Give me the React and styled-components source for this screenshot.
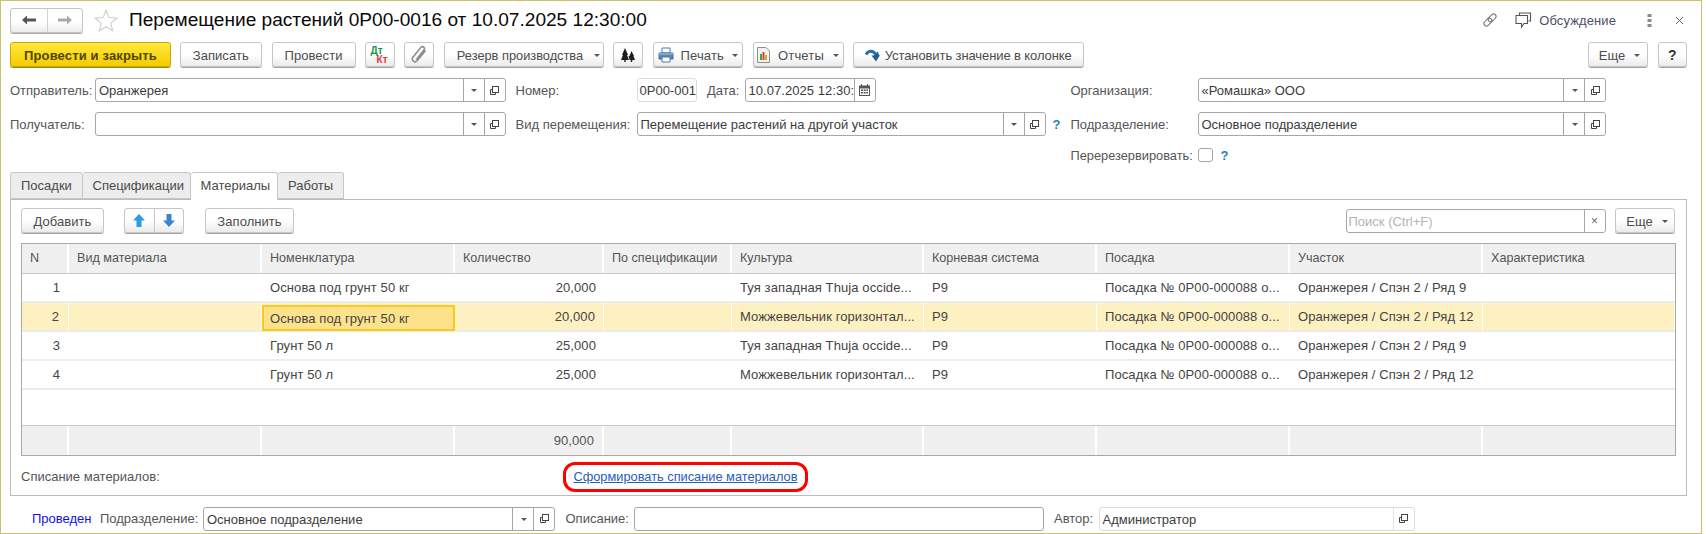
import React from "react";
import styled, { createGlobalStyle } from "styled-components";

const Global = createGlobalStyle`
  html, body { margin: 0; padding: 0; background: #fff; }
  body { font-family: "Liberation Sans", Arial, sans-serif; font-size: 13px; color: #4a4a4a; }
  * { box-sizing: border-box; }
`;

const Frame = styled.div`
  width: 1702px; height: 534px;
  border: 1px solid #cdbf70;
  padding-top: 7px; padding-left: 9px; overflow: hidden; background: #fff;
`;

/* ---------- header ---------- */
const Header = styled.div`
  display: flex; align-items: center; height: 24px; padding-right: 17px;
`;
const NavGroup = styled.div`
  display: flex; width: 73px; height: 25px;
  border: 1px solid #c4c4c4; border-radius: 3px;
  background: linear-gradient(#fff 55%, #ececec);
  box-shadow: 0 1px 0 #a9a9a9;
`;
const NavCell = styled.div`
  width: 36px; display: flex; align-items: center; justify-content: center;
  & + & { border-left: 1px solid #d2d2d2; }
`;
const StarBox = styled.div`
  margin-left: 11px; width: 25px; height: 24px; display: flex; align-items: center;
`;
const Title = styled.div`
  margin-left: 10px; font-size: 19.1px; color: #0a0a0a; white-space: nowrap;
`;
const HeaderRight = styled.div`
  margin-left: auto; display: flex; align-items: center; color: #5a6070;
`;
const HeaderGap = styled.span`width: ${p => p.$w}px; flex: none;`;
const HeaderLabel = styled.span`
  font-size: 13px; color: #4a5068; margin-left: 7px; margin-right: 31px; letter-spacing: .1px;
`;

/* ---------- buttons ---------- */
const Toolbar = styled.div`
  display: flex; height: 26px; margin-top: 10px; padding-right: 14px;
`;
const Btn = styled.div`
  width: ${p => p.$w}px; height: 25px; margin-left: ${p => p.$ml ?? 0}px; flex: none;
  display: flex; align-items: center; justify-content: center; gap: ${p => p.$gap ?? 6}px;
  padding: 1px 0 0 ${p => p.$pl ?? 0}px;
  border: 1px solid ${p => (p.$primary ? "#c9a800" : "#c6c6c6")}; border-radius: 3px;
  background: ${p => (p.$primary ? "linear-gradient(#ffe93f, #f6cb00)" : "linear-gradient(#fff 50%, #ebebeb)")};
  box-shadow: 0 1px 0 ${p => (p.$primary ? "#9f8a1c" : "#a4a4a4")};
  color: ${p => (p.$primary ? "#4f4500" : "#4c4c4c")};
  font-weight: ${p => (p.$primary ? 700 : 400)};
  font-size: ${p => p.$fs ?? 13}px; letter-spacing: ${p => p.$ls ?? 0.05}px; white-space: nowrap;
`;
const Caret = styled.i`
  display: inline-block; width: 0; height: 0; margin-left: 1px; margin-top: 1px;
  border-left: 3px solid transparent; border-right: 3px solid transparent; border-top: 3px solid #555;
`;
const HelpMark = styled.b`color: #333; font-size: 14px;`;
const Spacer = styled.div`flex: 1;`;
const DtKt = styled.div`
  position: relative; width: 19px; height: 18px; font-size: 10px; font-weight: 700; line-height: 9px;
`;
const Dt = styled.span`position: absolute; left: 0; top: 0; color: #0c9a45;`;
const Kt = styled.span`position: absolute; left: 6px; top: 9px; color: #e5383b;`;
const ArrowGroup = styled.div`
  display: flex; width: 60px; height: 25px; margin-left: 20px; flex: none;
  border: 1px solid #c6c6c6; border-radius: 3px;
  background: linear-gradient(#fff 50%, #ebebeb); box-shadow: 0 1px 0 #a4a4a4;
`;
const ArrowCell = styled.div`
  flex: 1; display: flex; align-items: center; justify-content: center;
  & + & { border-left: 1px solid #c6c6c6; }
`;

/* ---------- fields ---------- */
const FormGrid = styled.div`
  display: grid; grid-template-columns: 505.5px 555px 1fr; height: 87px; margin-top: 10px;
`;
const FormCol = styled.div`display: flex; flex-direction: column;`;
const FieldRow = styled.div`
  display: flex; align-items: center; height: 24px;
  & + & { margin-top: 10px; }
`;
const CheckRow = styled(FieldRow)`height: 14px; margin-top: 12px !important;`;
const Label = styled.span`
  flex: none; width: ${p => (p.$w ? p.$w + "px" : "auto")}; margin-left: ${p => p.$ml ?? 0}px;
  white-space: nowrap; color: #555; letter-spacing: 0;
  font-size: ${p => p.$fs ?? 13}px;
`;
const Field = styled.div`
  display: flex; align-items: stretch; flex: none; width: ${p => p.$w}px; height: 24px;
  margin-left: ${p => p.$ml ?? 0}px;
  border: 1px solid ${p => (p.$soft ? "#dcdcdc" : "#a6a6a6")}; border-radius: 3px; background: #fff;
`;
const FieldText = styled.div`
  flex: 1; min-width: 0; padding-left: ${p => p.$pl ?? 3}px; line-height: 23px; color: #3c3c3c;
  letter-spacing: ${p => p.$ls ?? 0}px;
  white-space: nowrap; overflow: hidden;
`;
const Placeholder = styled(FieldText)`color: #b4b4b4; padding-left: 2px;`;
const FieldBtn = styled.div`
  flex: none; width: 21px; display: flex; align-items: center; justify-content: center;
  border-left: 1px solid ${p => (p.$soft ? "#e2e2e2" : "#a6a6a6")};
`;
const Help = styled.span`
  margin-left: ${p => p.$ml ?? 5}px; color: #1f7fc0; font-weight: 700; font-size: 13px;
`;
const Check = styled.div`
  width: 15px; height: 14px; border: 1px solid #a6a6a6; border-radius: 3px; flex: none; margin-left: 3px;
`;

/* ---------- tabs ---------- */
const Tabs = styled.div`
  display: flex; margin-top: 7px; height: 27px; position: relative; z-index: 1;
`;
const Tab = styled.div`
  width: ${p => p.$w}px; height: ${p => (p.$active ? 28 : 27)}px;
  padding-left: 10px; line-height: 26px;
  border: 1px solid #c6c6c6; border-bottom: ${p => (p.$active ? "none" : "1px solid #c6c6c6")};
  border-left: ${p => (p.$first ? "1px solid #c6c6c6" : "none")};
  border-radius: 3px 3px 0 0;
  background: ${p => (p.$active ? "#fff" : "#ededed")};
  color: #4a4a4a;
`;
const Panel = styled.div`
  width: 1677px; height: 297px; border: 1px solid #bcbcbc;
  padding: 8px 11px 0 10px;
`;
const PanelBar = styled.div`display: flex; height: 26px;`;
const Search = styled(Field)`margin-left: auto; margin-top: 1px;`;
const SearchX = styled(FieldBtn)`color: #666; font-size: 12px; border-left-color: #a6a6a6;`;

/* ---------- table ---------- */
const TableBox = styled.div`
  margin-top: 9px; height: 213px; width: 1655px; border: 1px solid #a8a8a8;
  display: flex; flex-direction: column;
`;
const Cols = "47px 193px 193px 149px 128px 192px 173px 193px 193px 1fr";
const HeadRow = styled.div`
  display: grid; grid-template-columns: ${Cols}; height: 30px; background: #f0f0f0;
  border-bottom: 1px solid #c8c8c8; flex: none;
`;
const HeadCell = styled.div`
  padding-left: 8px; line-height: 29px; color: #555; font-size: 12.6px;
  border-right: 2px solid #fff; white-space: nowrap; overflow: hidden;
  &:last-child { border-right: none; }
`;
const Row = styled.div`
  display: grid; grid-template-columns: ${Cols}; height: 29px; flex: none;
  background: ${p => (p.$sel ? "#fdf1c2" : "#fff")};
  border-bottom: 2px solid #ececec;
`;
const Cell = styled.div`
  padding: 0 8px; line-height: 28px; color: #444; letter-spacing: .1px;
  text-align: ${p => (p.$r ? "right" : "left")};
  white-space: nowrap; overflow: hidden;
  border-right: ${p => (p.$sel ? "1px solid #fff" : "none")};
`;
const NumCell = styled(Cell)`padding: 0 9px 0 0;`;
const CurCell = styled(Cell)`
  background: #fde28c; border: 2px solid #fcc81c; padding: 0 6px; line-height: 23px; margin: 2px 0 -1px;
`;
const EmptyRow = styled.div`flex: 1;`;
const FootRow = styled.div`
  display: grid; grid-template-columns: ${Cols}; height: 30px; background: #f0f0f0;
  border-top: 1px solid #c8c8c8; flex: none;
`;
const FootCell = styled.div`
  padding-right: 8px; text-align: right; line-height: 29px; color: #555; letter-spacing: .1px;
  border-right: 2px solid #fff;
  &:last-child { border-right: none; }
`;

const BottomLine = styled.div`
  display: flex; align-items: center; height: 30px; margin-top: 6px;
`;
const BottomLabel = styled.span`color: #555; width: 542px; padding-bottom: 2px;`;
const Oval = styled.div`
  width: 245px; height: 30px; border: 3px solid #f00; border-radius: 12px; padding-bottom: 2px;
  display: flex; align-items: center; justify-content: center;
`;
const LinkText = styled.span`color: #1f5fb8; text-decoration: underline; font-size: 12.8px; white-space: nowrap;`;

/* ---------- footer ---------- */
const Footer = styled.div`
  display: flex; align-items: center; height: 25px; margin-top: 10px; padding-left: 22px;
`;
const Posted = styled.span`color: #1111e0; width: 68px; flex: none;`;

const dropIcon = <Caret />;
const OpenIcon = () => (
  <svg width="11" height="11" viewBox="0 0 11 11" fill="none" stroke="#444" strokeWidth="1">
    <rect x="3.5" y="1.5" width="6" height="6" />
    <path d="M3.5 4.5H1.5V9.5H6.5V7.5" />
  </svg>
);

const LookupField = ({ w, ml, text, soft }) => (
  <Field $w={w} $ml={ml} $soft={soft}>
    <FieldText>{text}</FieldText>
    {!soft && <FieldBtn>{dropIcon}</FieldBtn>}
    <FieldBtn $soft={soft}><OpenIcon /></FieldBtn>
  </Field>
);

const headers = ["N", "Вид материала", "Номенклатура", "Количество", "По спецификации", "Культура", "Корневая система", "Посадка", "Участок", "Характеристика"];
const rows = [
  ["1", "", "Основа под грунт 50 кг", "20,000", "", "Туя западная Thuja occide...", "P9", "Посадка № 0Р00-000088 о...", "Оранжерея / Спэн 2 / Ряд 9", ""],
  ["2", "", "Основа под грунт 50 кг", "20,000", "", "Можжевельник горизонтал...", "P9", "Посадка № 0Р00-000088 о...", "Оранжерея / Спэн 2 / Ряд 12", ""],
  ["3", "", "Грунт 50 л", "25,000", "", "Туя западная Thuja occide...", "P9", "Посадка № 0Р00-000088 о...", "Оранжерея / Спэн 2 / Ряд 9", ""],
  ["4", "", "Грунт 50 л", "25,000", "", "Можжевельник горизонтал...", "P9", "Посадка № 0Р00-000088 о...", "Оранжерея / Спэн 2 / Ряд 12", ""],
];

const ArrowLeft = ({ c }) => (
  <svg width="14" height="10" viewBox="0 0 14 10"><path d="M0 5 5 .5V3.5H14V6.5H5V9.5Z" fill={c} /></svg>
);
const ArrowRight = ({ c }) => (
  <svg width="14" height="10" viewBox="0 0 14 10"><path d="M14 5 9 .5V3.5H0V6.5H9V9.5Z" fill={c} /></svg>
);
const Star = () => (
  <svg width="24" height="23" viewBox="0 0 24 23" fill="#fff" stroke="#c9ced2" strokeWidth="1.1">
    <path d="M12 1.5 15 8.6 22.8 9.2 16.8 14.2 18.7 21.8 12 17.7 5.3 21.8 7.2 14.2 1.2 9.2 9 8.6Z" />
  </svg>
);
const LinkIcon = () => (
  <svg width="16" height="16" viewBox="0 0 16 16" fill="none" stroke="#707070" strokeWidth="1">
    <g transform="rotate(-45 8 8)">
      <rect x="0.5" y="5.5" width="9" height="5" rx="2.5" />
      <rect x="6.5" y="5.5" width="9" height="5" rx="2.5" />
    </g>
  </svg>
);
const TalkIcon = () => (
  <svg width="17" height="17" viewBox="0 0 17 17" fill="none" stroke="#555" strokeWidth="1.1">
    <path d="M4.500 3.500V1H15.500V9H13.500" />
    <path d="M1 3.500H12.500V11.500H9L6.500 15V11.500H1Z" fill="#fff" />
  </svg>
);
const Dots = () => (
  <svg width="5" height="14" viewBox="0 0 5 14" fill="#8a8a8a">
    <rect x="0.500" y="1" width="4" height="3" /><rect x="0.500" y="6" width="4" height="3" /><rect x="0.500" y="11" width="4" height="3" />
  </svg>
);
const Close = () => (
  <svg width="9" height="9" viewBox="0 0 9 9" stroke="#666" strokeWidth="1"><path d="M1 1 8 8M8 1 1 8" /></svg>
);
const Clip = () => (
  <svg width="18" height="21" viewBox="0 0 18 21" fill="none" stroke="#8b8b8b" strokeWidth="1.500">
    <path d="M15.500 5.500 7 16a2.800 2.800 0 0 1-4.300-3.500L11 2.300a2 2 0 0 1 3.100 2.500L6.200 14.600" />
  </svg>
);
const Trees = () => (
  <svg width="14" height="14" viewBox="0 0 14 14" fill="#1d1d1d">
    <path d="M4 0 7 7H6L8 12H4.700V14H3.300V12H0L2 7H1Z" />
    <path d="M10.500 3 13 8H12.400L14 12H11.200V14H9.800V12H8.800L7.500 8.200 8.500 8Z" />
  </svg>
);
const Printer = () => (
  <svg width="16" height="16" viewBox="0 0 16 16">
    <path d="M4 1H12V6H4Z" fill="#fff" stroke="#4d7ba8" />
    <path d="M1 6H15V12H1Z" fill="#5b87b3" stroke="#3f6c99" />
    <rect x="1" y="6" width="14" height="2" fill="#7fa6c9" />
    <path d="M4 10H12V15H4Z" fill="#fff" stroke="#4d7ba8" />
  </svg>
);
const Report = () => (
  <svg width="13" height="16" viewBox="0 0 13 16">
    <path d="M.500.500H9L12.500 4V15.500H.500Z" fill="#f4f2ec" stroke="#8f8f8f" />
    <rect x="3" y="7" width="2" height="6" fill="#3aa655" />
    <rect x="5.500" y="5" width="2" height="8" fill="#d8443c" />
    <rect x="8" y="8" width="2" height="5" fill="#e0a42a" />
  </svg>
);
const CurveArrow = () => (
  <svg width="15" height="14" viewBox="0 0 15 14">
    <path d="M1 6.500C3 2.500 7.500 2 10.500 6" fill="none" stroke="#2a6ea6" strokeWidth="3" />
    <path d="M6.500 7.500H14.800L11 13.500Z" fill="#1f5c90" />
    <path d="M12.500 3.500 14.500 8H8.500Z" fill="#1f5c90" />
  </svg>
);
const UpArrow = () => (
  <svg width="12" height="13" viewBox="0 0 12 13"><path d="M6 0 12 6.500H8.500V13H3.500V6.500H0Z" fill="#2f9be0" /></svg>
);
const DownArrow = () => (
  <svg width="12" height="13" viewBox="0 0 12 13"><path d="M6 13 12 6.500H8.500V0H3.500V6.500H0Z" fill="#3a85cc" /></svg>
);
const Calendar = () => (
  <svg width="11" height="12" viewBox="0 0 11 12" fill="#555">
    <path d="M0 1.500H2V0H3V1.500H8V0H9V1.500H11V12H0ZM1 4.500V11H10V4.500Z" />
    <rect x="2" y="5.500" width="2" height="1.500" /><rect x="4.700" y="5.500" width="2" height="1.500" /><rect x="7.300" y="5.500" width="1.700" height="1.500" />
    <rect x="2" y="8" width="2" height="1.500" /><rect x="4.700" y="8" width="2" height="1.500" /><rect x="7.300" y="8" width="1.700" height="1.500" />
  </svg>
);

export default function App() {
  return (
    <>
      <Global />
      <Frame>
        <Header>
          <NavGroup>
            <NavCell><ArrowLeft c="#555" /></NavCell>
            <NavCell><ArrowRight c="#aaa" /></NavCell>
          </NavGroup>
          <StarBox><Star /></StarBox>
          <Title>Перемещение растений 0Р00-0016 от 10.07.2025 12:30:00</Title>
          <HeaderRight>
            <LinkIcon />
            <HeaderGap $w={17} />
            <TalkIcon />
            <HeaderLabel>Обсуждение</HeaderLabel>
            <Dots />
            <HeaderGap $w={23} />
            <Close />
          </HeaderRight>
        </Header>

        <Toolbar>
          <Btn $primary $w={161} $ls={0.15}>Провести и закрыть</Btn>
          <Btn $w={82.500} $ml={8.500}>Записать</Btn>
          <Btn $w={84} $ml={9.500}>Провести</Btn>
          <Btn $w={30} $ml={9.500}><DtKt><Dt>Дт</Dt><Kt>Кт</Kt></DtKt></Btn>
          <Btn $w={30} $ml={9}><Clip /></Btn>
          <Btn $w={160} $ml={9.500} $ls={0} $fs={12.8} $gap={10} $pl={10}>Резерв производства {dropIcon}</Btn>
          <Btn $w={30} $ml={9.500}><Trees /></Btn>
          <Btn $w={90.500} $ml={9.500} $gap={7} $ls={0.15}><Printer />Печать {dropIcon}</Btn>
          <Btn $w={91} $ml={9.500} $gap={8} $ls={0.15}><Report />Отчеты {dropIcon}</Btn>
          <Btn $w={230.500} $ml={9.500} $gap={5} $ls={-0.1}><CurveArrow />Установить значение в колонке</Btn>
          <Spacer />
          <Btn $w={60} $gap={8} $pl={4}>Еще {dropIcon}</Btn>
          <Btn $w={29.500} $ml={10}><HelpMark>?</HelpMark></Btn>
        </Toolbar>

        <FormGrid>
          <FormCol>
            <FieldRow>
              <Label $w={85}>Отправитель:</Label>
              <LookupField w={410.500} text="Оранжерея" />
            </FieldRow>
            <FieldRow>
              <Label $w={85}>Получатель:</Label>
              <LookupField w={410.500} text="" />
            </FieldRow>
          </FormCol>
          <FormCol>
            <FieldRow>
              <Label $w={121}>Номер:</Label>
              <Field $w={60} $soft><FieldText $pl={2}>0Р00-001</FieldText></Field>
              <Label $ml={10.500} $w={37.500}>Дата:</Label>
              <Field $w={131}>
                <FieldText $ls={0.05}>10.07.2025 12:30:</FieldText>
                <FieldBtn><Calendar /></FieldBtn>
              </Field>
            </FieldRow>
            <FieldRow>
              <Label $w={121}>Вид перемещения:</Label>
              <LookupField w={409} text="Перемещение растений на другой участок" />
              <Help $ml={7}>?</Help>
            </FieldRow>
          </FormCol>
          <FormCol>
            <FieldRow>
              <Label $w={127}>Организация:</Label>
              <LookupField w={408.500} text="«Ромашка» ООО" />
            </FieldRow>
            <FieldRow>
              <Label $w={127}>Подразделение:</Label>
              <LookupField w={408.500} text="Основное подразделение" />
            </FieldRow>
            <CheckRow>
              <Label $w={124} $fs={12.8}>Перерезервировать:</Label>
              <Check />
              <Help $ml={8}>?</Help>
            </CheckRow>
          </FormCol>
        </FormGrid>

        <Tabs>
          <Tab $first $w={72.500}>Посадки</Tab>
          <Tab $w={108}>Спецификации</Tab>
          <Tab $w={87.500} $active>Материалы</Tab>
          <Tab $w={65.500}>Работы</Tab>
        </Tabs>
        <Panel>
          <PanelBar>
            <Btn $w={83}>Добавить</Btn>
            <ArrowGroup>
              <ArrowCell><UpArrow /></ArrowCell>
              <ArrowCell><DownArrow /></ArrowCell>
            </ArrowGroup>
            <Btn $w={89} $ml={21}>Заполнить</Btn>
            <Search $w={260}>
              <Placeholder>Поиск (Ctrl+F)</Placeholder>
              <SearchX>×</SearchX>
            </Search>
            <Btn $w={60} $ml={9.500} $gap={8} $pl={4}>Еще {dropIcon}</Btn>
          </PanelBar>
          <TableBox>
            <HeadRow>
              {headers.map(h => <HeadCell key={h}>{h}</HeadCell>)}
            </HeadRow>
            {rows.map((r, i) => {
              const sel = i === 1;
              return (
                <Row key={i} $sel={sel}>
                  <NumCell $r $sel={sel}>{r[0]}</NumCell>
                  {r.slice(1).map((c, j) => {
                    const idx = j + 1;
                    if (sel && idx === 2) return <CurCell key={j}>{c}</CurCell>;
                    return <Cell key={j} $r={idx === 3} $sel={sel}>{c}</Cell>;
                  })}
                </Row>
              );
            })}
            <EmptyRow />
            <FootRow>
              {headers.map((h, i) => <FootCell key={h}>{i === 3 ? "90,000" : ""}</FootCell>)}
            </FootRow>
          </TableBox>
          <BottomLine>
            <BottomLabel>Списание материалов:</BottomLabel>
            <Oval><LinkText>Сформировать списание материалов</LinkText></Oval>
          </BottomLine>
        </Panel>

        <Footer>
          <Posted>Проведен</Posted>
          <Label $w={103}>Подразделение:</Label>
          <LookupField w={352} text="Основное подразделение" />
          <Label $ml={10.500} $w={68}>Описание:</Label>
          <Field $w={410}><FieldText /></Field>
          <Label $ml={10.500} $w={44.500}>Автор:</Label>
          <LookupField w={316} text="Администратор" soft />
        </Footer>
      </Frame>
    </>
  );
}
